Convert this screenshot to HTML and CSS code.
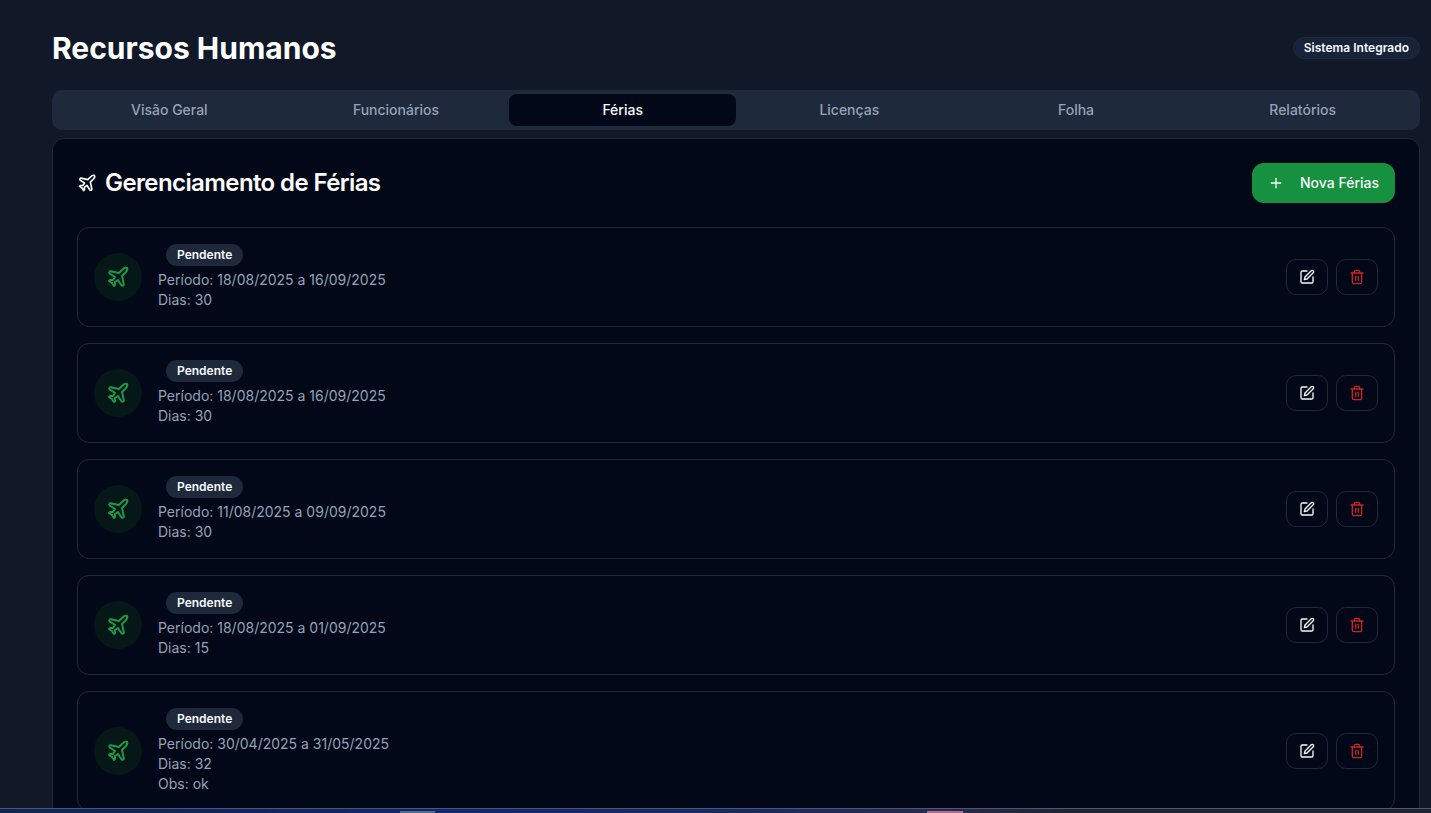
FILE: index.html
```html
<!DOCTYPE html>
<html lang="pt-BR">
<head>
<meta charset="utf-8">
<title>Recursos Humanos</title>
<link rel="stylesheet" href="styles.css">
</head>
<body>
<svg class="sprite" width="0" height="0" aria-hidden="true">
  <symbol id="plane" viewBox="0 0 24 24"><path d="M17.8 19.2 16 11l3.5-3.5C21 6 21.5 4 21 3c-1-.5-3 0-4.5 1.5L13 8 4.8 6.2c-.5-.1-.9.1-1.1.5l-.3.5c-.2.5-.1 1 .3 1.3L9 12l-2 3H4l-1 1 3 2 2 3 1-1v-3l3-2 3.5 5.3c.3.4.8.5 1.3.3l.5-.2c.4-.3.6-.7.5-1.2z"/></symbol>
  <symbol id="pen" viewBox="0 0 24 24"><path d="M12 3H5a2 2 0 0 0-2 2v14a2 2 0 0 0 2 2h14a2 2 0 0 0 2-2v-7"/><path d="M18.375 2.625a2.121 2.121 0 1 1 3 3L12 15l-4 1 1-4Z"/></symbol>
  <symbol id="trash" viewBox="0 0 24 24"><path d="M3 6h18"/><path d="M19 6v14c0 1-1 2-2 2H7c-1 0-2-1-2-2V6"/><path d="M8 6V4c0-1 1-2 2-2h4c1 0 2 1 2 2v2"/><path d="M10 11v6"/><path d="M14 11v6"/></symbol>
  <symbol id="plus" viewBox="0 0 24 24"><path d="M5 12h14"/><path d="M12 5v14"/></symbol>
</svg>

<main class="page">
  <header class="top">
    <h1>Recursos Humanos</h1>
    <span class="system">Sistema Integrado</span>
  </header>

  <nav class="tabs">
    <a class="tab">Visão Geral</a>
    <a class="tab">Funcionários</a>
    <a class="tab active">Férias</a>
    <a class="tab">Licenças</a>
    <a class="tab">Folha</a>
    <a class="tab">Relatórios</a>
  </nav>

  <section class="card">
    <div class="card-head">
      <h2><svg class="icon i20"><use href="#plane"/></svg>Gerenciamento de Férias</h2>
      <button class="new"><svg class="icon i16"><use href="#plus"/></svg>Nova Férias</button>
    </div>

    <ul class="list">
      <li class="item">
        <div class="left">
          <div class="round"><svg class="icon i24"><use href="#plane"/></svg></div>
          <div class="info">
            <div class="row"><span class="status">Pendente</span></div>
            <p>Período: 18/08/2025 a 16/09/2025</p>
            <p>Dias: 30</p>
          </div>
        </div>
        <div class="actions">
          <button class="act"><svg class="icon i16"><use href="#pen"/></svg></button>
          <button class="act del"><svg class="icon i16"><use href="#trash"/></svg></button>
        </div>
      </li>
      <li class="item">
        <div class="left">
          <div class="round"><svg class="icon i24"><use href="#plane"/></svg></div>
          <div class="info">
            <div class="row"><span class="status">Pendente</span></div>
            <p>Período: 18/08/2025 a 16/09/2025</p>
            <p>Dias: 30</p>
          </div>
        </div>
        <div class="actions">
          <button class="act"><svg class="icon i16"><use href="#pen"/></svg></button>
          <button class="act del"><svg class="icon i16"><use href="#trash"/></svg></button>
        </div>
      </li>
      <li class="item">
        <div class="left">
          <div class="round"><svg class="icon i24"><use href="#plane"/></svg></div>
          <div class="info">
            <div class="row"><span class="status">Pendente</span></div>
            <p>Período: 11/08/2025 a 09/09/2025</p>
            <p>Dias: 30</p>
          </div>
        </div>
        <div class="actions">
          <button class="act"><svg class="icon i16"><use href="#pen"/></svg></button>
          <button class="act del"><svg class="icon i16"><use href="#trash"/></svg></button>
        </div>
      </li>
      <li class="item">
        <div class="left">
          <div class="round"><svg class="icon i24"><use href="#plane"/></svg></div>
          <div class="info">
            <div class="row"><span class="status">Pendente</span></div>
            <p>Período: 18/08/2025 a 01/09/2025</p>
            <p>Dias: 15</p>
          </div>
        </div>
        <div class="actions">
          <button class="act"><svg class="icon i16"><use href="#pen"/></svg></button>
          <button class="act del"><svg class="icon i16"><use href="#trash"/></svg></button>
        </div>
      </li>
      <li class="item">
        <div class="left">
          <div class="round"><svg class="icon i24"><use href="#plane"/></svg></div>
          <div class="info">
            <div class="row"><span class="status">Pendente</span></div>
            <p>Período: 30/04/2025 a 31/05/2025</p>
            <p>Dias: 32</p>
            <p>Obs: ok</p>
          </div>
        </div>
        <div class="actions">
          <button class="act"><svg class="icon i16"><use href="#pen"/></svg></button>
          <button class="act del"><svg class="icon i16"><use href="#trash"/></svg></button>
        </div>
      </li>
    </ul>
  </section>
</main>

<div class="taskbar"><span class="tb-a"></span><span class="tb-b"></span></div>
</body>
</html>
```

FILE: styles.css
```css
* { box-sizing: border-box; }

html, body {
  margin: 0;
  height: 100%;
  overflow: hidden;
}

body {
  background: #111827;
  color: #f8fafc;
  font-family: Inter, "Liberation Sans", sans-serif;
}

.sprite { position: absolute; }

.page {
  padding: 30px 11px 0 52px;
}

.top {
  display: flex;
  align-items: center;
  justify-content: space-between;
  margin-bottom: 24px;
}

h1 {
  margin: 0;
  font-size: 30px;
  line-height: 36px;
  font-weight: 700;
  color: #fff;
}

.system {
  padding: 2px 10px;
  border: 1px solid #1e293b;
  border-radius: 999px;
  background: #172338;
  font-size: 12px;
  line-height: 16px;
  font-weight: 600;
  color: #f8fafc;
}

.tabs {
  display: grid;
  grid-template-columns: repeat(6, 1fr);
  height: 40px;
  padding: 4px;
  border-radius: 10px;
  background: #1e293b;
}

.tab {
  display: flex;
  align-items: center;
  justify-content: center;
  border-radius: 8px;
  font-size: 14px;
  line-height: 20px;
  font-weight: 500;
  color: #94a3b8;
}

.tab.active {
  background: #020817;
  color: #f8fafc;
}

.card {
  margin-top: 8px;
  padding: 24px;
  border: 1px solid #1e293b;
  border-radius: 12px;
  background: #020817;
}

.card-head {
  display: flex;
  align-items: center;
  justify-content: space-between;
  margin-bottom: 24px;
}

h2 {
  display: flex;
  align-items: center;
  gap: 8px;
  margin: 0;
  font-size: 24px;
  line-height: 32px;
  font-weight: 600;
  letter-spacing: -0.6px;
  color: #fff;
}

.icon {
  display: block;
  flex: none;
  fill: none;
  stroke: currentColor;
  stroke-width: 2;
  stroke-linecap: round;
  stroke-linejoin: round;
}

.i16 { width: 16px; height: 16px; }
.i20 { width: 20px; height: 20px; }
.i24 { width: 24px; height: 24px; }

.new {
  display: flex;
  align-items: center;
  gap: 16px;
  height: 40px;
  padding: 0 16px;
  border: 0;
  border-radius: 12px;
  background: #16913f;
  color: #f8fafc;
  font: 500 14px/20px Inter, "Liberation Sans", sans-serif;
}

.list {
  display: flex;
  flex-direction: column;
  gap: 16px;
  margin: 0;
  padding: 0;
  list-style: none;
}

.item {
  display: flex;
  align-items: center;
  justify-content: space-between;
  padding: 16px;
  border: 1px solid #1e293b;
  border-radius: 12px;
}

.left {
  display: flex;
  align-items: center;
  gap: 16px;
}

.round {
  display: flex;
  align-items: center;
  justify-content: center;
  width: 48px;
  height: 48px;
  border-radius: 50%;
  background: #051716;
  color: #1c9a48;
}

.row {
  display: flex;
  margin-bottom: 4px;
}

.status {
  margin-left: 8px;
  padding: 2px 10px;
  border: 1px solid transparent;
  border-radius: 999px;
  background: #1e293b;
  font-size: 12px;
  line-height: 16px;
  font-weight: 600;
  color: #f8fafc;
}

.info p {
  margin: 0;
  font-size: 14px;
  line-height: 20px;
  color: #94a3b8;
}

.actions {
  display: flex;
  gap: 8px;
}

.act {
  display: flex;
  align-items: center;
  justify-content: center;
  width: 42px;
  height: 36px;
  padding: 0;
  border: 1px solid #1e293b;
  border-radius: 10px;
  background: #020817;
  color: #f8fafc;
}

.act.del { color: #c92323; }

.taskbar {
  position: fixed;
  left: 0;
  right: 0;
  bottom: 0;
  height: 5px;
  border-top: 1px solid #4b5670;
  background: linear-gradient(90deg, #0f2450 0%, #10296a 35%, #1c2a5c 55%, #2a2a4a 66%, #1e2433 75%, #1e2433 100%);
}

.tb-a, .tb-b {
  position: absolute;
  bottom: 0;
  height: 2px;
}

.tb-a { left: 400px; width: 35px; background: #4f6f86; }
.tb-b { left: 927px; width: 36px; background: #a8708a; }
```
